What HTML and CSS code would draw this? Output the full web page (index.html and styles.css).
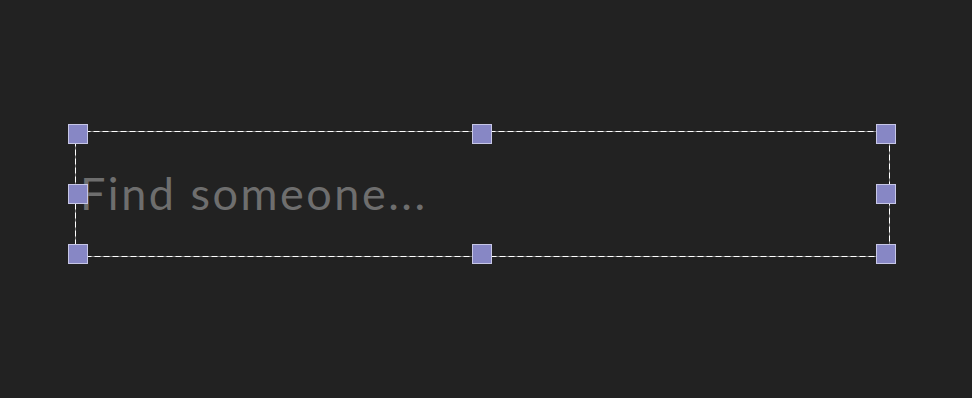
FILE: index.html
```html
<!DOCTYPE html>
<html>
<head>
<meta charset="utf-8">
<link rel="stylesheet" href="styles.css">
</head>
<body>
<div class="stage">
  <div class="selection">
    <svg class="outline" width="815" height="126" viewBox="0 0 815 126">
      <rect x="0.5" y="0.5" width="814" height="125" fill="none" stroke="#777777" stroke-width="1"/>
      <rect x="0.5" y="0.5" width="814" height="125" fill="none" stroke="#ffffff" stroke-width="1" stroke-dasharray="6 3"/>
    </svg>
    <div class="field">Find someone...</div>
    <span class="handle h-tl"></span>
    <span class="handle h-tc"></span>
    <span class="handle h-tr"></span>
    <span class="handle h-ml"></span>
    <span class="handle h-mr"></span>
    <span class="handle h-bl"></span>
    <span class="handle h-bc"></span>
    <span class="handle h-br"></span>
  </div>
</div>
</body>
</html>
```

FILE: styles.css
```css
html, body {
  margin: 0;
  padding: 0;
  background: #222222;
  width: 972px;
  height: 398px;
  overflow: hidden;
}
.stage {
  padding-top: 131px;
  padding-left: 75px;
}
.selection {
  position: relative;
  width: 815px;
  height: 126px;
  display: flex;
  align-items: center;
}
.outline {
  position: absolute;
  left: 0;
  top: 0;
}
.field {
  padding-left: 5px;
  margin-top: -2px;
  font-family: Lato, "Noto Sans", sans-serif;
  font-size: 45px;
  color: #6e6e6e;
  letter-spacing: 2.5px;
  line-height: 1;
}
.handle {
  position: absolute;
  width: 18px;
  height: 18px;
  background: #8787c5;
  border: 1px solid #c6c6e6;
}
.h-tl { left: -7px; top: -7px; }
.h-tc { left: 397px; top: -7px; }
.h-tr { left: 801px; top: -7px; }
.h-ml { left: -7px; top: 53px; }
.h-mr { left: 801px; top: 53px; }
.h-bl { left: -7px; top: 113px; }
.h-bc { left: 397px; top: 113px; }
.h-br { left: 801px; top: 113px; }
```
